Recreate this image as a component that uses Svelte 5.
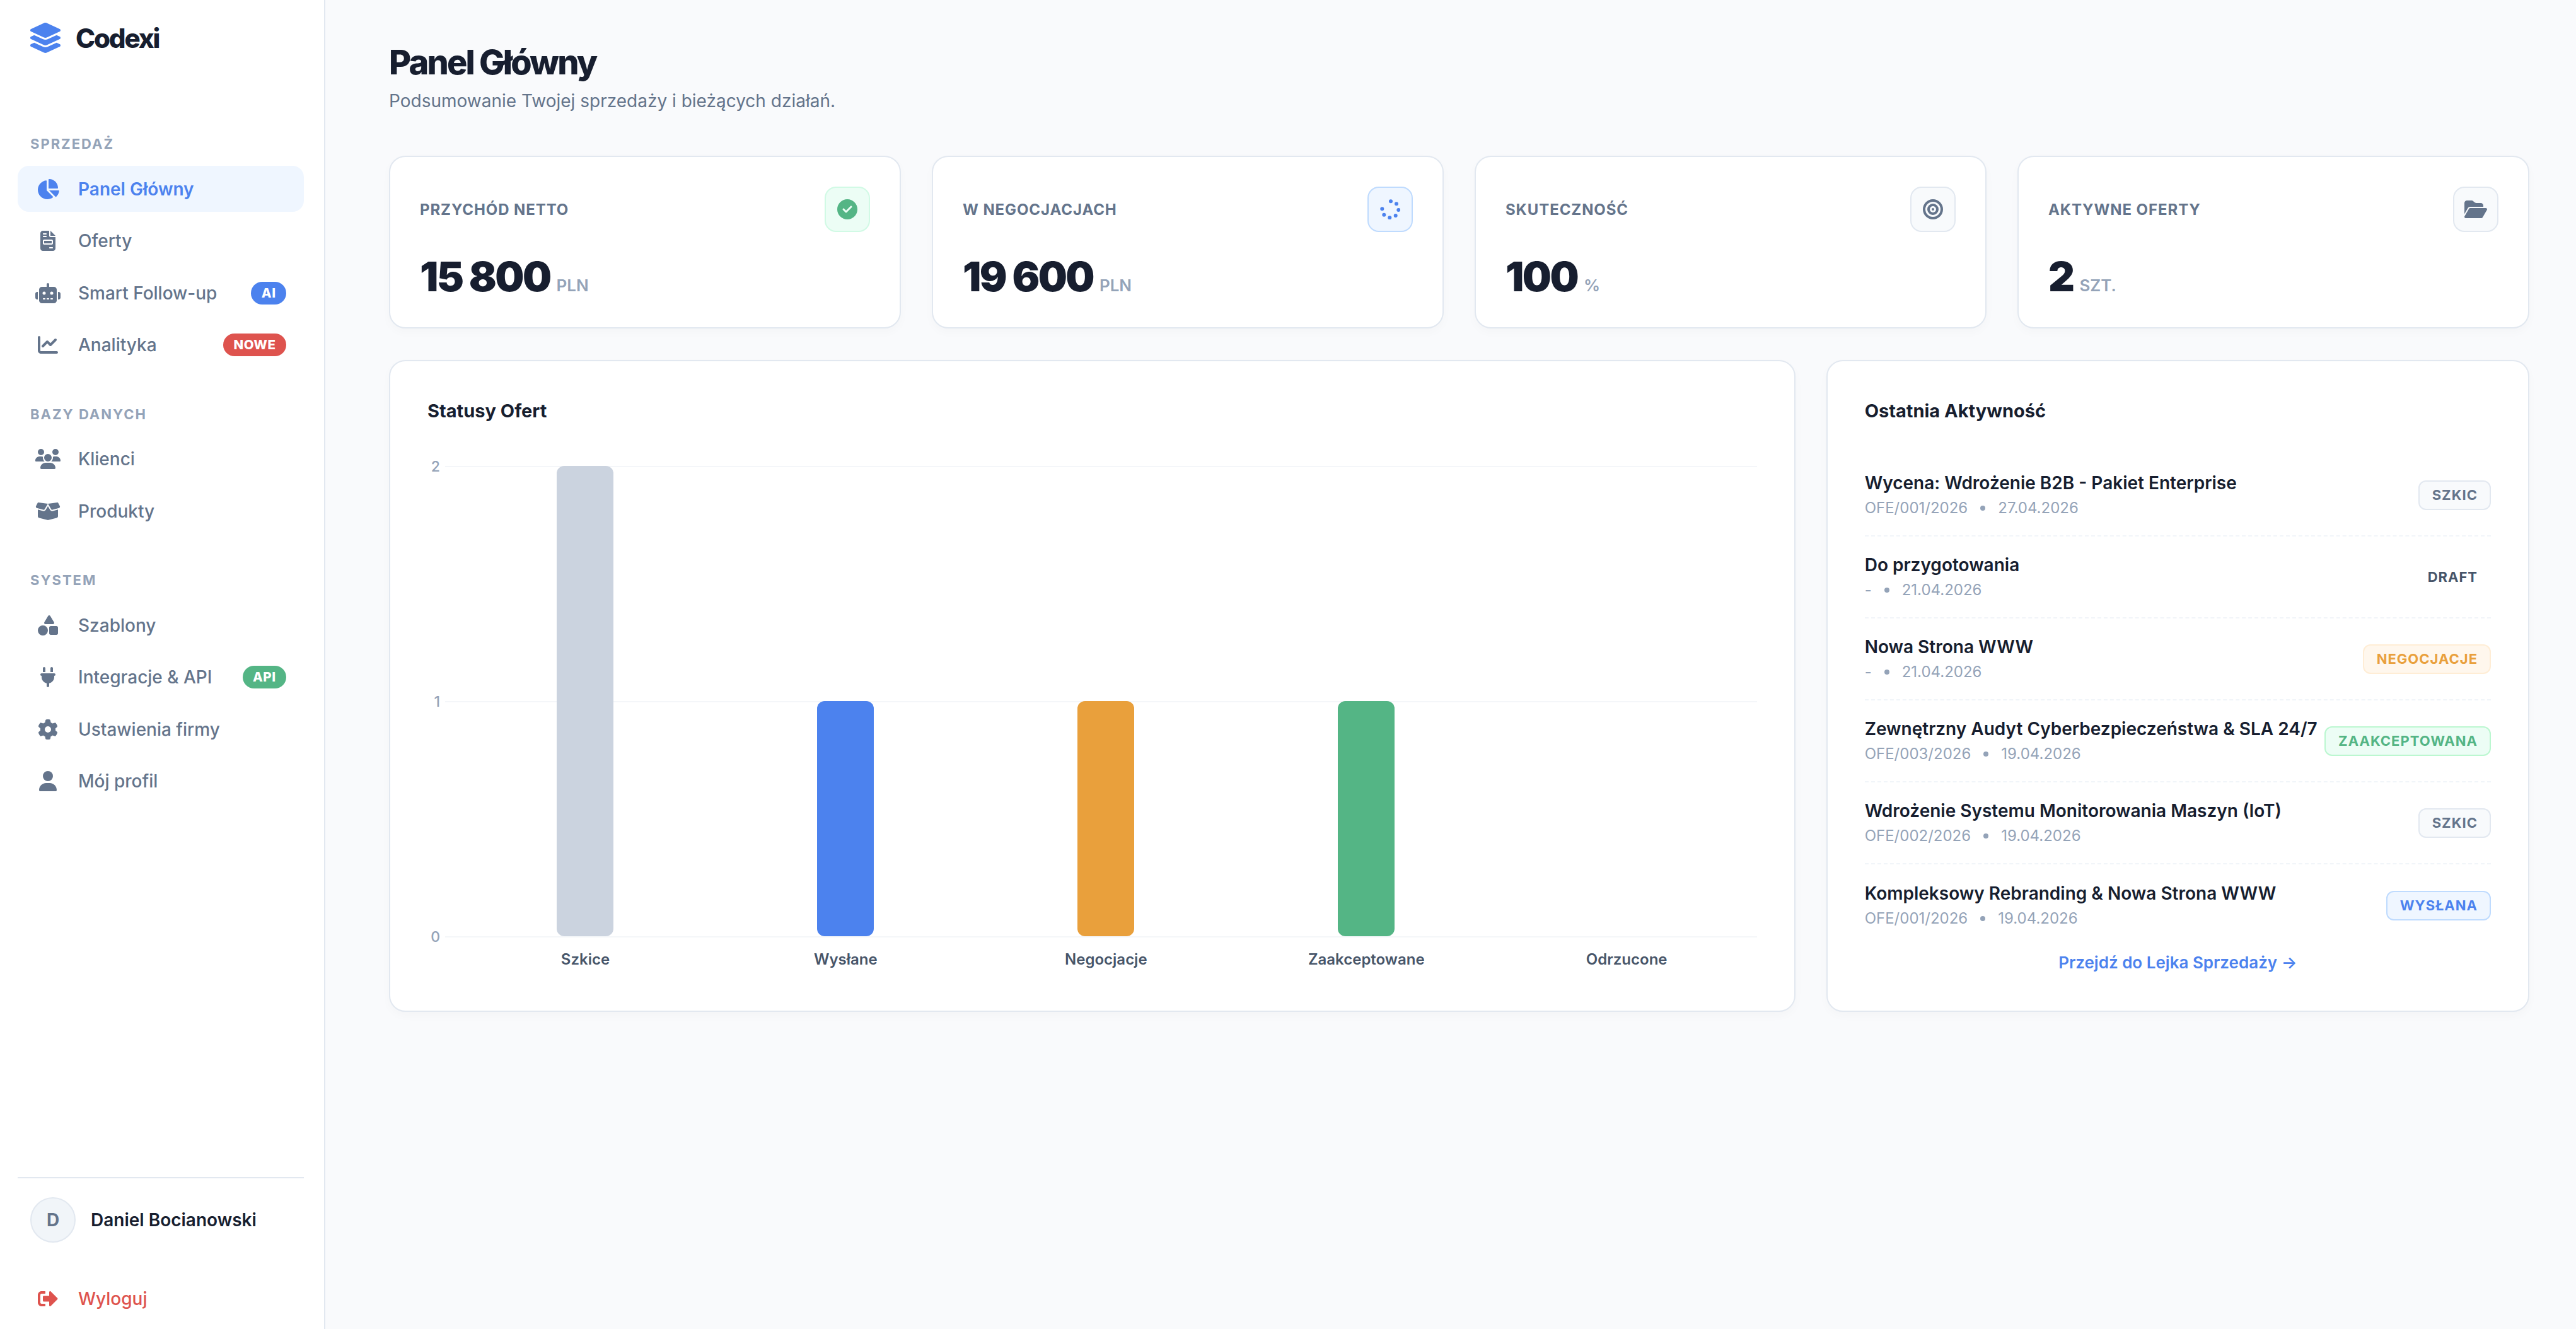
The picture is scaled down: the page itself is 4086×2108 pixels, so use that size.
<script>
  const icons = {
    pie: ['0 0 576 512', 'M304 240V16.6c0-9 7-16.6 16-16.6C443.7 0 544 100.3 544 224c0 9-7.6 16-16.6 16H304zM32 272C32 150.7 122.1 50.3 239 34.3c9.2-1.3 17 6.1 17 15.4V288L412.5 444.5c6.7 6.7 6.2 17.7-1.5 23.1C371.8 495.6 323.8 512 272 512C139.5 512 32 404.6 32 272zm526.4 16c9.3 0 16.6 7.8 15.4 17c-7.7 55.9-34.6 105.6-73.9 142.3c-6 5.6-15.4 5.2-21.2-.7L320 288H558.4z'],
    invoice: ['0 0 384 512', 'M64 0C28.7 0 0 28.7 0 64V448c0 35.3 28.7 64 64 64H320c35.3 0 64-28.7 64-64V160H256c-17.7 0-32-14.3-32-32V0H64zM256 0V128H384L256 0zM80 64h64c8.8 0 16 7.2 16 16s-7.2 16-16 16H80c-8.8 0-16-7.2-16-16s7.2-16 16-16zm0 64h64c8.8 0 16 7.2 16 16s-7.2 16-16 16H80c-8.8 0-16-7.2-16-16s7.2-16 16-16zm16 96H288c17.7 0 32 14.3 32 32v64c0 17.7-14.3 32-32 32H96c-17.7 0-32-14.3-32-32V256c0-17.7 14.3-32 32-32zm0 32v64H288V256H96zM240 416h64c8.8 0 16 7.2 16 16s-7.2 16-16 16H240c-8.8 0-16-7.2-16-16s7.2-16 16-16z'],
    robot: ['0 0 640 512', 'M320 0c17.7 0 32 14.3 32 32V96H472c39.8 0 72 32.2 72 72V440c0 39.8-32.2 72-72 72H168c-39.8 0-72-32.2-72-72V168c0-39.8 32.2-72 72-72H288V32c0-17.7 14.3-32 32-32zM208 384c-8.8 0-16 7.2-16 16s7.2 16 16 16h32c8.8 0 16-7.2 16-16s-7.2-16-16-16H208zm96 0c-8.8 0-16 7.2-16 16s7.2 16 16 16h32c8.8 0 16-7.2 16-16s-7.2-16-16-16H304zm96 0c-8.8 0-16 7.2-16 16s7.2 16 16 16h32c8.8 0 16-7.2 16-16s-7.2-16-16-16H400zM264 256a40 40 0 1 0 -80 0 40 40 0 1 0 80 0zm152 40a40 40 0 1 0 0-80 40 40 0 1 0 0 80zM48 224H64V416H48c-26.5 0-48-21.5-48-48V272c0-26.5 21.5-48 48-48zm544 0c26.5 0 48 21.5 48 48v96c0 26.5-21.5 48-48 48H576V224h16z'],
    line: ['0 0 512 512', 'M64 64c0-17.7-14.3-32-32-32S0 46.3 0 64V400c0 44.2 35.8 80 80 80H480c17.7 0 32-14.3 32-32s-14.3-32-32-32H80c-8.8 0-16-7.2-16-16V64zm406.6 86.6c12.5-12.5 12.5-32.8 0-45.3s-32.8-12.5-45.3 0L320 210.7l-57.4-57.4c-12.5-12.5-32.8-12.5-45.3 0l-112 112c-12.5 12.5-12.5 32.8 0 45.3s32.8 12.5 45.3 0L240 221.3l57.4 57.4c12.5 12.5 32.8 12.5 45.3 0l128-128z'],
    users: ['0 0 640 512', 'M144 0a80 80 0 1 1 0 160A80 80 0 1 1 144 0zM512 0a80 80 0 1 1 0 160A80 80 0 1 1 512 0zM0 298.7C0 239.8 47.8 192 106.7 192h42.7c15.9 0 31 3.5 44.6 9.7c-1.3 7.2-1.9 14.7-1.9 22.3c0 38.2 16.8 72.5 43.3 96c-.2 0-.4 0-.7 0H21.3C9.6 320 0 310.4 0 298.7zM405.3 320c-.2 0-.4 0-.7 0c26.6-23.5 43.3-57.8 43.3-96c0-7.6-.7-15-1.9-22.3c13.6-6.3 28.7-9.7 44.6-9.7h42.7C592.2 192 640 239.8 640 298.7c0 11.8-9.6 21.3-21.3 21.3H405.3zM224 224a96 96 0 1 1 192 0 96 96 0 1 1 -192 0zM128 485.3C128 411.7 187.7 352 261.3 352H378.7C452.3 352 512 411.7 512 485.3c0 14.7-11.9 26.7-26.7 26.7H154.7c-14.7 0-26.7-11.9-26.7-26.7z'],
    box: ['0 0 640 512', 'M58.9 42.1c3-6.1 9.6-9.6 16.3-8.7L320 64 564.8 33.4c6.7-.8 13.3 2.7 16.3 8.7l41.7 83.4c9 17.9-.6 39.6-19.8 45.1L439.6 217.3c-13.9 4-28.8-1.9-36.2-14.3L320 64 236.6 203c-7.4 12.4-22.3 18.3-36.2 14.3L37.1 170.6c-19.3-5.5-28.8-27.2-19.8-45.1L58.9 42.1zM321.1 128l54.9 91.4c14.9 24.8 44.6 36.6 72.5 28.6L576 211.6v167c0 22-15 41.2-36.4 46.6l-204 51c-10.2 2.6-20.9 2.6-31 0l-204-51C79 419.7 64 400.5 64 378.5v-167L191.6 248c27.8 8 57.6-3.8 72.5-28.6L318.9 128h2.2z'],
    shapes: ['0 0 512 512', 'M315.4 15.5C309.7 5.9 299.2 0 288 0s-21.7 5.9-27.4 15.5l-96 160c-5.9 9.9-6.1 22.2-.4 32.2s16.3 16.2 27.8 16.2H384c11.5 0 22.2-6.2 27.8-16.2s5.5-22.3-.4-32.2l-96-160zM288 312V456c0 22.1 17.9 40 40 40H472c22.1 0 40-17.9 40-40V312c0-22.1-17.9-40-40-40H328c-22.1 0-40 17.9-40 40zM128 512a128 128 0 1 0 0-256 128 128 0 1 0 0 256z'],
    plug: ['0 0 384 512', 'M96 0C78.3 0 64 14.3 64 32v96h64V32c0-17.7-14.3-32-32-32zM288 0c-17.7 0-32 14.3-32 32v96h64V32c0-17.7-14.3-32-32-32zM32 160c-17.7 0-32 14.3-32 32s14.3 32 32 32v32c0 77.4 55 142 128 156.8V480c0 17.7 14.3 32 32 32s32-14.3 32-32V412.8C297 398 352 333.4 352 256V224c17.7 0 32-14.3 32-32s-14.3-32-32-32H32z'],
    gear: ['0 0 512 512', 'M495.9 166.6c3.2 8.7 .5 18.4-6.4 24.6l-43.3 39.4c1.1 8.3 1.7 16.8 1.7 25.4s-.6 17.1-1.7 25.4l43.3 39.4c6.9 6.2 9.6 15.9 6.4 24.6c-4.4 11.9-9.7 23.3-15.8 34.3l-4.7 8.1c-6.6 11-14 21.4-22.1 31.2c-5.9 7.2-15.7 9.6-24.5 6.8l-55.7-17.7c-13.4 10.3-28.2 18.9-44 25.4l-12.5 57.1c-2 9.1-9 16.3-18.2 17.8c-13.8 2.3-28 3.5-42.5 3.5s-28.7-1.2-42.5-3.5c-9.2-1.5-16.2-8.7-18.2-17.8l-12.5-57.1c-15.8-6.5-30.6-15.1-44-25.4L83.1 425.9c-8.8 2.8-18.6 .3-24.5-6.8c-8.1-9.8-15.5-20.2-22.1-31.2l-4.7-8.1c-6.1-11-11.4-22.4-15.8-34.3c-3.2-8.7-.5-18.4 6.4-24.6l43.3-39.4C64.6 273.1 64 264.6 64 256s.6-17.1 1.7-25.4L22.4 191.2c-6.9-6.2-9.6-15.9-6.4-24.6c4.4-11.9 9.7-23.3 15.8-34.3l4.7-8.1c6.6-11 14-21.4 22.1-31.2c5.9-7.2 15.7-9.6 24.5-6.8l55.7 17.7c13.4-10.3 28.2-18.9 44-25.4l12.5-57.1c2-9.1 9-16.3 18.2-17.8C227.3 1.2 241.5 0 256 0s28.7 1.2 42.5 3.5c9.2 1.5 16.2 8.7 18.2 17.8l12.5 57.1c15.8 6.5 30.6 15.1 44 25.4l55.7-17.7c8.8-2.8 18.6-.3 24.5 6.8c8.1 9.8 15.5 20.2 22.1 31.2l4.7 8.1c6.1 11 11.4 22.4 15.8 34.3zM256 336a80 80 0 1 0 0-160 80 80 0 1 0 0 160z'],
    user: ['0 0 448 512', 'M224 256A128 128 0 1 0 224 0a128 128 0 1 0 0 256zm-45.7 48C79.8 304 0 383.8 0 482.3C0 498.7 13.3 512 29.7 512H418.3c16.4 0 29.7-13.3 29.7-29.7C448 383.8 368.2 304 269.7 304H178.3z'],
    logout: ['0 0 512 512', 'M497 273L329 441c-15 15-41 4.5-41-17v-96H152c-13.3 0-24-10.7-24-24v-96c0-13.3 10.7-24 24-24h136V88c0-21.4 25.9-32 41-17l168 168c9.3 9.4 9.3 24.6 0 34zM192 436v-40c0-6.6-5.4-12-12-12H96c-17.7 0-32-14.3-32-32V160c0-17.7 14.3-32 32-32h84c6.6 0 12-5.4 12-12V76c0-6.6-5.4-12-12-12H96c-53 0-96 43-96 96v192c0 53 43 96 96 96h84c6.6 0 12-5.4 12-12z'],
    check: ['0 0 512 512', 'M256 512A256 256 0 1 0 256 0a256 256 0 1 0 0 512zM369 209L241 337c-9.4 9.4-24.6 9.4-33.9 0l-64-64c-9.4-9.4-9.4-24.6 0-33.9s24.6-9.4 33.9 0l47 47L335 175c9.4-9.4 24.6-9.4 33.9 0s9.4 24.6 0 33.9z'],
    target: ['0 0 512 512', 'M448 256A192 192 0 1 0 64 256a192 192 0 1 0 384 0zM0 256a256 256 0 1 1 512 0A256 256 0 1 1 0 256zm256 80a80 80 0 1 0 0-160 80 80 0 1 0 0 160zm0-224a144 144 0 1 1 0 288 144 144 0 1 1 0-288zM224 256a32 32 0 1 1 64 0 32 32 0 1 1 -64 0z'],
    folder: ['0 0 576 512', 'M88.7 223.8L0 375.8V96C0 60.7 28.7 32 64 32H181.5c17 0 33.3 6.7 45.3 18.7l26.5 26.5c12 12 28.3 18.7 45.3 18.7H416c35.3 0 64 28.7 64 64v32H144c-22.8 0-43.8 12.1-55.3 31.8zm27.6 16.1C122.1 230 132.6 224 144 224H544c11.5 0 22 6.1 27.7 16.1s5.7 22.2-.1 32.1l-112 192C453.9 474 443.4 480 432 480H32c-11.5 0-22-6.1-27.7-16.1s-5.7-22.2 .1-32.1l112-192z']
  }

  const nav = [
    { title: 'Sprzedaż', items: [
      { label: 'Panel Główny', icon: 'pie', active: true },
      { label: 'Oferty', icon: 'invoice' },
      { label: 'Smart Follow-up', icon: 'robot', badge: 'AI', tone: 'blue' },
      { label: 'Analityka', icon: 'line', badge: 'NOWE', tone: 'red' }
    ] },
    { title: 'Bazy danych', items: [
      { label: 'Klienci', icon: 'users' },
      { label: 'Produkty', icon: 'box' }
    ] },
    { title: 'System', items: [
      { label: 'Szablony', icon: 'shapes' },
      { label: 'Integracje & API', icon: 'plug', badge: 'API', tone: 'green' },
      { label: 'Ustawienia firmy', icon: 'gear' },
      { label: 'Mój profil', icon: 'user' }
    ] }
  ]

  const stats = [
    { label: 'Przychód netto', value: '15 800', unit: 'PLN', icon: 'check', tone: 'green' },
    { label: 'W negocjacjach', value: '19 600', unit: 'PLN', icon: 'spinner', tone: 'blue' },
    { label: 'Skuteczność', value: '100', unit: '%', icon: 'target', tone: 'slate' },
    { label: 'Aktywne oferty', value: '2', unit: 'szt.', icon: 'folder', tone: 'slate' }
  ]

  const spinnerDots = [[17, 3.3], [26, 7.3], [29.3, 17], [24.7, 26], [15.3, 29.3], [6.3, 24.7], [3.3, 15.3]]

  const ticks = [2, 1, 0]
  const bars = [
    { label: 'Szkice', value: 2, color: '#cbd3df' },
    { label: 'Wysłane', value: 1, color: '#4c82ee' },
    { label: 'Negocjacje', value: 1, color: '#e9a03c' },
    { label: 'Zaakceptowane', value: 1, color: '#54b585' },
    { label: 'Odrzucone', value: 0, color: '#de534e' }
  ]

  const activity = [
    { title: 'Wycena: Wdrożenie B2B - Pakiet Enterprise', ref: 'OFE/001/2026', date: '27.04.2026', status: 'Szkic', tone: 'slate' },
    { title: 'Do przygotowania', ref: '-', date: '21.04.2026', status: 'Draft', tone: 'plain' },
    { title: 'Nowa Strona WWW', ref: '-', date: '21.04.2026', status: 'Negocjacje', tone: 'orange' },
    { title: 'Zewnętrzny Audyt Cyberbezpieczeństwa & SLA 24/7', ref: 'OFE/003/2026', date: '19.04.2026', status: 'Zaakceptowana', tone: 'green' },
    { title: 'Wdrożenie Systemu Monitorowania Maszyn (IoT)', ref: 'OFE/002/2026', date: '19.04.2026', status: 'Szkic', tone: 'slate' },
    { title: 'Kompleksowy Rebranding & Nowa Strona WWW', ref: 'OFE/001/2026', date: '19.04.2026', status: 'Wysłana', tone: 'blue' }
  ]
</script>

{#snippet icon(name)}
  <svg class="glyph" viewBox={icons[name][0]} style="width:{(parseInt(icons[name][0].split(' ')[2]) / 512) * 32}px" aria-hidden="true">
    <path fill="currentColor" d={icons[name][1]} />
  </svg>
{/snippet}

<div class="app">
  <aside class="sidebar">
    <div class="brand">
      <svg class="brand-mark" viewBox="32 0 512 512" aria-hidden="true">
        <path fill="currentColor" d="M264.5 5.2c14.9-6.9 32.1-6.9 47 0l218.6 101c8.5 3.9 13.9 12.4 13.9 21.8s-5.4 17.9-13.9 21.8l-218.6 101c-14.9 6.9-32.1 6.9-47 0L45.9 149.8C37.4 145.8 32 137.3 32 128s5.4-17.9 13.9-21.8L264.5 5.2zM476.9 209.6l53.2 24.6c8.5 3.9 13.9 12.4 13.9 21.8s-5.4 17.9-13.9 21.8l-218.6 101c-14.9 6.9-32.1 6.9-47 0L45.9 277.8C37.4 273.8 32 265.3 32 256s5.4-17.9 13.9-21.8l53.2-24.6 152 70.2c23.4 10.8 50.4 10.8 73.8 0l152-70.2zm-152 198.2l152-70.2 53.2 24.6c8.5 3.9 13.9 12.4 13.9 21.8s-5.4 17.9-13.9 21.8l-218.6 101c-14.9 6.9-32.1 6.9-47 0L45.9 405.8C37.4 401.8 32 393.3 32 384s5.4-17.9 13.9-21.8l53.2-24.6 152 70.2c23.4 10.8 50.4 10.8 73.8 0z" />
      </svg>
      <span>Codexi</span>
    </div>

    {#each nav as group}
      <nav class="group">
        <div class="group-title">{group.title}</div>
        <div class="group-items">
          {#each group.items as item}
            <div class="nav-item" class:active={item.active}>
              <span class="nav-icon">{@render icon(item.icon)}</span>
              <span class="nav-label">{item.label}</span>
              {#if item.badge}
                <span class="pill {item.tone}">{item.badge}</span>
              {/if}
            </div>
          {/each}
        </div>
      </nav>
    {/each}

    <div class="sidebar-foot">
      <div class="me">
        <span class="avatar">D</span>
        <span class="me-name">Daniel Bocianowski</span>
      </div>
      <div class="nav-item logout">
        <span class="nav-icon">{@render icon('logout')}</span>
        <span class="nav-label">Wyloguj</span>
      </div>
    </div>
  </aside>

  <main class="main">
    <h1>Panel Główny</h1>
    <p class="lead">Podsumowanie Twojej sprzedaży i bieżących działań.</p>

    <section class="stats">
      {#each stats as s}
        <div class="card stat">
          <div class="stat-head">
            <span class="stat-label">{s.label}</span>
            <span class="stat-icon {s.tone}">
              {#if s.icon === 'spinner'}
                <svg class="glyph" viewBox="0 0 32 32" aria-hidden="true">
                  {#each spinnerDots as d}
                    <circle cx={d[0]} cy={d[1]} r="3" fill="currentColor" />
                  {/each}
                </svg>
              {:else}
                {@render icon(s.icon)}
              {/if}
            </span>
          </div>
          <div class="stat-value">
            <span class="num">{s.value}</span>
            <span class="unit">{s.unit}</span>
          </div>
        </div>
      {/each}
    </section>

    <section class="lower">
      <div class="card panel">
        <h2>Statusy Ofert</h2>
        <div class="chart">
          <div class="plot">
            {#each ticks as t}
              <div class="tick" style="top:{((2 - t) / 2) * 100}%">
                <span class="tick-label">{t}</span>
              </div>
            {/each}
            <div class="columns">
              {#each bars as b}
                <div class="col">
                  {#if b.value}
                    <div class="bar" style="height:{(b.value / 2) * 100}%;background:{b.color}"></div>
                  {/if}
                </div>
              {/each}
            </div>
          </div>
          <div class="x-labels">
            {#each bars as b}
              <span>{b.label}</span>
            {/each}
          </div>
        </div>
      </div>

      <div class="card panel">
        <h2>Ostatnia Aktywność</h2>
        <ul class="feed">
          {#each activity as a}
            <li class="feed-row">
              <div class="feed-text">
                <div class="feed-title">{a.title}</div>
                <div class="feed-sub">
                  <span>{a.ref}</span>
                  <i class="dot"></i>
                  <span>{a.date}</span>
                </div>
              </div>
              <span class="status {a.tone}">{a.status}</span>
            </li>
          {/each}
        </ul>
        <div class="feed-link">Przejdź do Lejka Sprzedaży →</div>
      </div>
    </section>
  </main>
</div>

<style>
  :global(body) {
    margin: 0;
    background: #f9fafc;
  }

  .app {
    display: flex;
    height: 2108px;
    font-family: Inter, "Noto Sans", sans-serif;
    color: #171e2f;
  }

  .glyph {
    display: block;
    height: 32px;
    width: 32px;
  }

  /* sidebar */
  .sidebar {
    flex: none;
    box-sizing: border-box;
    width: 516px;
    padding: 36px 32px 12px 28px;
    background: #fff;
    border-right: 2px solid #e2e8f0;
    display: flex;
    flex-direction: column;
  }

  .brand {
    display: flex;
    align-items: center;
    gap: 24px;
    padding-left: 20px;
    height: 48px;
    font-size: 42px;
    font-weight: 800;
    letter-spacing: -2.2px;
  }

  .brand-mark {
    width: 48px;
    height: 48px;
    color: #4c82ee;
  }

  .group {
    margin-top: 60px;
  }

  .group:first-of-type {
    margin-top: 131px;
  }

  .group-title {
    padding-left: 20px;
    height: 26px;
    line-height: 26px;
    margin-bottom: 22px;
    font-size: 22px;
    font-weight: 700;
    letter-spacing: 2px;
    text-transform: uppercase;
    color: #94a3b8;
  }

  .group-items {
    display: flex;
    flex-direction: column;
    gap: 9.5px;
  }

  .nav-item {
    display: flex;
    align-items: center;
    height: 73px;
    padding: 0 28px;
    border-radius: 18px;
    font-size: 28px;
    font-weight: 500;
    color: #64748b;
  }

  .nav-item.active {
    background: #eff6ff;
    color: #4c82ee;
    font-weight: 600;
  }

  .nav-icon {
    flex: none;
    width: 40px;
    display: flex;
    justify-content: center;
    margin-right: 28px;
  }

  .nav-label {
    flex: 1;
    white-space: nowrap;
  }

  .pill {
    flex: none;
    padding: 0 16.5px;
    height: 36px;
    line-height: 36px;
    border-radius: 18px;
    font-size: 20.5px;
    font-weight: 800;
    letter-spacing: 0.5px;
    color: #fff;
  }

  .pill.blue { background: #4c82ee; }
  .pill.red { background: #de534e; }
  .pill.green { background: #54b585; }

  .sidebar-foot {
    margin-top: auto;
    border-top: 2px solid #e2e8f0;
  }

  .me {
    display: flex;
    align-items: center;
    gap: 24px;
    padding: 30px 20px 0;
  }

  .avatar {
    flex: none;
    box-sizing: border-box;
    width: 72px;
    height: 72px;
    border-radius: 50%;
    background: #f1f5f9;
    border: 2px solid #e2e8f0;
    display: flex;
    align-items: center;
    justify-content: center;
    font-size: 28px;
    font-weight: 700;
    color: #64748b;
  }

  .me-name {
    font-size: 28px;
    font-weight: 600;
    white-space: nowrap;
  }

  .logout {
    margin-top: 52px;
    color: #de534e;
  }

  /* main */
  .main {
    flex: 1;
    min-width: 0;
    padding: 66px 74px 0 101px;
  }

  h1 {
    margin: 0;
    font-size: 54px;
    line-height: 65px;
    font-weight: 800;
    letter-spacing: -2.8px;
  }

  .lead {
    margin: 11px 0 0;
    font-size: 28px;
    line-height: 36px;
    color: #64748b;
  }

  .stats {
    margin-top: 69px;
    display: grid;
    grid-template-columns: repeat(4, 1fr);
    gap: 49px;
  }

  .card {
    box-sizing: border-box;
    background: #fff;
    border: 2px solid #e2e8f0;
    border-radius: 26px;
    box-shadow: 0 6px 16px rgba(15, 23, 42, 0.025);
  }

  .stat {
    padding: 47px;
    height: 274px;
  }

  .stat-head {
    display: flex;
    align-items: center;
    justify-content: space-between;
  }

  .stat-label {
    font-size: 24px;
    font-weight: 700;
    letter-spacing: 0.9px;
    text-transform: uppercase;
    color: #64748b;
  }

  .stat-icon {
    box-sizing: border-box;
    width: 72px;
    height: 72px;
    border-radius: 18px;
    border: 2px solid;
    display: flex;
    align-items: center;
    justify-content: center;
  }

  .stat-icon.green { background: #ecfdf5; border-color: #d1fae5; color: #54b585; }
  .stat-icon.blue { background: #eff6ff; border-color: #bfdbfe; color: #4c82ee; }
  .stat-icon.slate { background: #f8fafc; border-color: #e2e8f0; color: #64748b; }

  .stat-value {
    margin-top: 38px;
    display: flex;
    align-items: baseline;
    gap: 10px;
  }

  .num {
    font-size: 65px;
    line-height: 65px;
    font-weight: 900;
    letter-spacing: -2.6px;
    white-space: pre;
  }

  .unit {
    font-size: 26px;
    font-weight: 600;
    text-transform: uppercase;
    color: #94a3b8;
  }

  .lower {
    margin-top: 50px;
    display: grid;
    grid-template-columns: minmax(0, 2fr) minmax(0, 1fr);
    gap: 49px;
  }

  .panel {
    padding: 61px 59px 59px;
  }

  h2 {
    margin: 0;
    font-size: 29px;
    line-height: 36px;
    font-weight: 700;
  }

  /* chart */
  .chart {
    margin-top: 69px;
    padding-left: 44px;
  }

  .plot {
    position: relative;
    height: 746px;
  }

  .tick {
    position: absolute;
    left: -16px;
    right: 0;
    border-top: 2px solid #f4f6f9;
  }

  .tick-label {
    position: absolute;
    right: 100%;
    top: -15px;
    line-height: 28px;
    padding-right: 8px;
    font-size: 23px;
    font-weight: 500;
    color: #94a3b8;
  }

  .columns {
    position: absolute;
    inset: 0;
    display: grid;
    grid-template-columns: repeat(5, 1fr);
  }

  .col {
    display: flex;
    align-items: flex-end;
    justify-content: center;
  }

  .bar {
    width: 90px;
    border-radius: 12px;
  }

  .x-labels {
    margin-top: 22px;
    display: grid;
    grid-template-columns: repeat(5, 1fr);
    text-align: center;
    font-size: 24px;
    line-height: 29px;
    font-weight: 600;
    color: #475569;
  }

  /* activity */
  .feed {
    list-style: none;
    margin: 51px 0 0;
    padding: 0;
  }

  .feed-row {
    box-sizing: border-box;
    height: 130px;
    display: flex;
    align-items: center;
    justify-content: space-between;
    gap: 10px;
    border-bottom: 2px dashed #f1f5f9;
  }

  .feed-row:last-child {
    border-bottom: 0;
  }

  .feed-title {
    font-size: 28px;
    line-height: 36px;
    font-weight: 600;
    white-space: nowrap;
  }

  .feed-sub {
    margin-top: 6px;
    display: flex;
    align-items: center;
    gap: 20px;
    font-size: 24px;
    line-height: 32px;
    color: #94a3b8;
  }

  .dot {
    width: 8px;
    height: 8px;
    border-radius: 50%;
    background: #94a3b8;
  }

  .status {
    flex: none;
    box-sizing: border-box;
    height: 47px;
    line-height: 43px;
    padding: 0 19px 0 20px;
    border: 2px solid transparent;
    border-radius: 12px;
    font-size: 22px;
    font-weight: 700;
    letter-spacing: 1px;
    text-transform: uppercase;
  }

  .status.slate { background: #f8fafc; border-color: #e2e8f0; color: #64748b; }
  .status.plain { color: #475569; }
  .status.orange { background: #fff7ed; border-color: #ffedd5; color: #e9a03c; }
  .status.green { background: #ecfdf5; border-color: #bbf7d0; color: #54b585; }
  .status.blue { background: #eff6ff; border-color: #bfdbfe; color: #4c82ee; }

  .feed-link {
    margin-top: 9px;
    text-align: center;
    font-size: 26px;
    line-height: 34px;
    font-weight: 600;
    color: #4c82ee;
  }
</style>
